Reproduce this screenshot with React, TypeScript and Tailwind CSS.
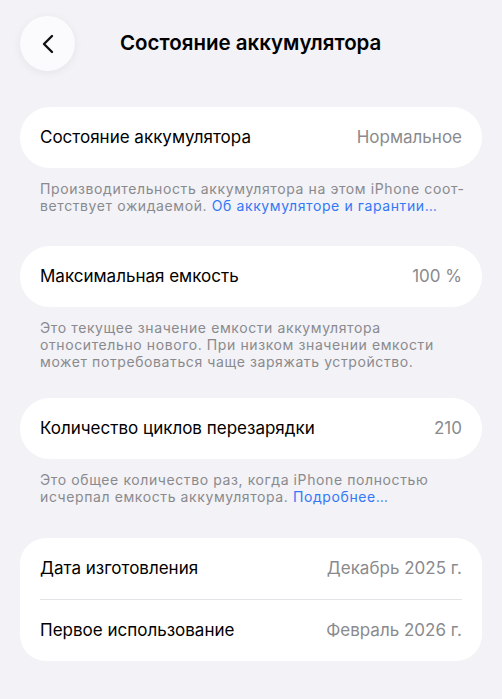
import { ReactNode } from "react";

const font = { fontFamily: "Inter, 'Noto Sans', 'Liberation Sans', sans-serif" };

function Row({ label, value }: { label: string; value: string }) {
  return (
    <div className="flex h-[61px] items-center justify-between px-5">
      <span className="text-[17px] text-black">{label}</span>
      <span className="text-[17px] text-[#8a8a8e]">{value}</span>
    </div>
  );
}

function Footnote({ children }: { children: ReactNode }) {
  return (
    <p className="mt-3 whitespace-nowrap px-5 text-[14px] leading-[17px] tracking-[0.6px] text-[#8a8a8e]">
      {children}
    </p>
  );
}

function Link({ children }: { children: ReactNode }) {
  return <span className="text-[#3478f6]">{children}</span>;
}

export default function App() {
  return (
    <div className="min-h-[699px] w-full bg-[#f2f2f7] px-5 pt-4" style={font}>
      <header className="flex items-center">
        <button className="flex h-[55px] w-[55px] items-center justify-center rounded-full bg-[#fbfbfd] shadow-[0_2px_10px_rgba(0,0,0,0.06)]">
          <svg width="14" height="20" viewBox="0 0 14 20" fill="none">
            <path d="M11 2L3 10L11 18" stroke="#111" strokeWidth="2.4" strokeLinecap="round" strokeLinejoin="round" />
          </svg>
        </button>
        <h1 className="ml-[45px] text-[20.5px] font-semibold text-black">Состояние аккумулятора</h1>
      </header>

      <section className="mt-9">
        <div className="rounded-[30px] bg-white">
          <Row label="Состояние аккумулятора" value="Нормальное" />
        </div>
        <Footnote>
          Производительность аккумулятора на этом iPhone соот-
          <br />
          ветствует ожидаемой. <Link>Об аккумуляторе и гарантии…</Link>
        </Footnote>
      </section>

      <section className="mt-[32px]">
        <div className="rounded-[30px] bg-white">
          <Row label="Максимальная емкость" value="100 %" />
        </div>
        <Footnote>
          Это текущее значение емкости аккумулятора
          <br />
          относительно нового. При низком значении емкости
          <br />
          может потребоваться чаще заряжать устройство.
        </Footnote>
      </section>

      <section className="mt-[28px]">
        <div className="rounded-[30px] bg-white">
          <Row label="Количество циклов перезарядки" value="210" />
        </div>
        <Footnote>
          Это общее количество раз, когда iPhone полностью
          <br />
          исчерпал емкость аккумулятора. <Link>Подробнее…</Link>
        </Footnote>
      </section>

      <section className="mt-[33px]">
        <div className="rounded-[26px] bg-white">
          <Row label="Дата изготовления" value="Декабрь 2025 г." />
          <div className="mx-5 h-px bg-[#e4e4e8]" />
          <Row label="Первое использование" value="Февраль 2026 г." />
        </div>
      </section>
    </div>
  );
}
